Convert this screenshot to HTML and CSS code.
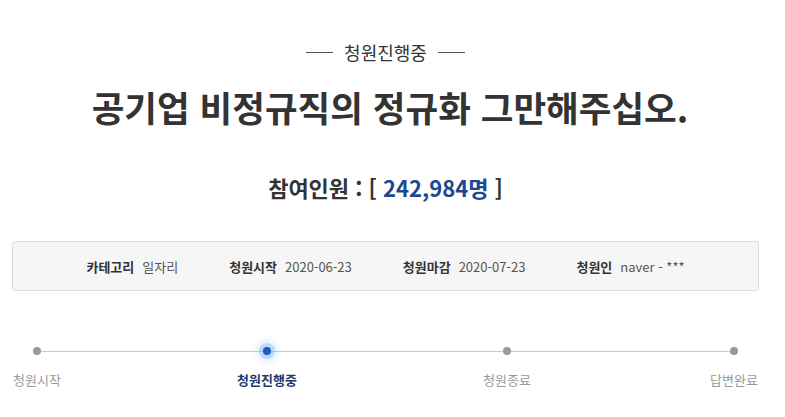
FILE: index.html
```html
<!DOCTYPE html>
<html lang="ko">
<head>
<meta charset="utf-8">
<link rel="stylesheet" href="styles.css">
</head>
<body>
<div class="page">
  <div class="status"><span class="dash"></span><span class="status-text">청원진행중</span><span class="dash"></span></div>
  <h1 class="title">공기업 비정규직의 정규화 그만해주십오.</h1>
  <div class="count">참여인원 : [ <span class="num">242,984명</span> ]</div>
  <div class="info">
    <div class="item"><span class="label">카테고리</span><span class="value">일자리</span></div>
    <div class="item"><span class="label">청원시작</span><span class="value">2020-06-23</span></div>
    <div class="item"><span class="label">청원마감</span><span class="value">2020-07-23</span></div>
    <div class="item"><span class="label">청원인</span><span class="value">naver - ***</span></div>
  </div>
  <div class="steps">
    <div class="step"><span class="dot"></span><span class="step-label">청원시작</span></div>
    <div class="step active"><span class="dot"></span><span class="step-label">청원진행중</span></div>
    <div class="step"><span class="dot"></span><span class="step-label">청원종료</span></div>
    <div class="step"><span class="dot"></span><span class="step-label">답변완료</span></div>
  </div>
</div>
</body>
</html>
```

FILE: styles.css
```css
html, body {
  margin: 0;
  padding: 0;
  background: #fff;
}
body {
  font-family: "Noto Sans CJK KR", "Noto Sans", sans-serif;
  color: #333;
}
.page {
  width: 747px;
  margin-left: 12px;
  padding-top: 42px;
  display: flex;
  flex-direction: column;
  align-items: stretch;
}
.status {
  display: flex;
  justify-content: center;
  align-items: center;
  gap: 11px;
  height: 20px;
  font-size: 18px;
  line-height: 20px;
  color: #333;
}
.dash {
  display: block;
  width: 27px;
  height: 1px;
  background: #555;
}
.title {
  margin: 23px 0 0;
  padding-left: 9px;
  text-align: center;
  font-size: 35.5px;
  line-height: 44px;
  font-weight: 700;
  color: #333;
  letter-spacing: 0;
}
.count {
  margin-top: 44px;
  text-align: center;
  font-size: 22px;
  line-height: 28px;
  font-weight: 700;
  color: #333;
}
.num {
  color: #1c4892;
}
.info {
  margin-top: 40px;
  height: 48px;
  box-sizing: content-box;
  border: 1px solid #dcdcdc;
  border-radius: 3px;
  background: #f6f6f6;
  display: flex;
  justify-content: center;
  align-items: center;
  gap: 51px;
  font-size: 13px;
}
.item {
  display: flex;
  align-items: center;
  gap: 8px;
}
.label {
  font-weight: 700;
  color: #333;
}
.value {
  color: #555;
}
.steps {
  margin-top: 56px;
  display: grid;
  grid-template-columns: 230px 240px 227px 50px;
  background: linear-gradient(#c8c8c8, #c8c8c8) no-repeat 25px 4px / calc(100% - 50px) 1px;
}
.step {
  width: 50px;
  display: flex;
  flex-direction: column;
  align-items: center;
}
.dot {
  display: block;
  width: 8px;
  height: 8px;
  border-radius: 50%;
  background: #999;
}
.step.active .dot {
  background: #1a5cc4;
  box-shadow: 0 0 0 4px rgba(110, 170, 240, 0.32), 0 0 8px 6px rgba(150, 195, 245, 0.35);
}
.step-label {
  margin-top: 16px;
  font-size: 13px;
  line-height: 18px;
  white-space: nowrap;
  color: #999;
}
.step.active .step-label {
  color: #1d3a6a;
  font-weight: 700;
}
```
